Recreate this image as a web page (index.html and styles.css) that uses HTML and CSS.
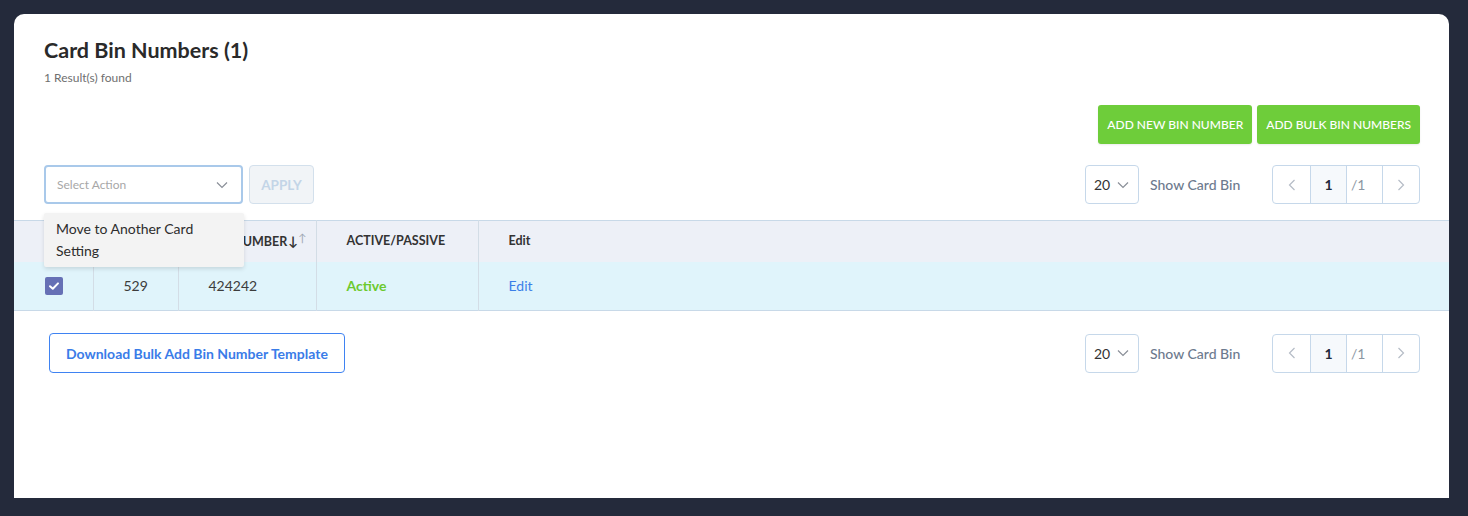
FILE: index.html
```html
<!DOCTYPE html>
<html>
<head>
<meta charset="utf-8">
<link rel="stylesheet" href="styles.css">
</head>
<body>
<div class="card">
  <div class="head">
    <h1 class="title">Card Bin Numbers (1)</h1>
    <div class="subtitle">1 Result(s) found</div>
  </div>
  <div class="actions">
    <button class="btn-green">ADD NEW BIN NUMBER</button>
    <button class="btn-green">ADD BULK BIN NUMBERS</button>
  </div>
  <div class="toolbar">
    <div class="left-tools">
      <div class="select-wrap">
        <div class="select">
          <span class="placeholder">Select Action</span>
          <svg class="chev" width="12" height="8" viewBox="0 0 12 8"><path d="M1 1.5 L6 6.5 L11 1.5" fill="none" stroke="#8a8f98" stroke-width="1.2"/></svg>
        </div>
        <div class="menu">
          <div class="menu-item">Move to Another Card Setting</div>
        </div>
      </div>
      <button class="btn-apply">APPLY</button>
    </div>
    <div class="pager-group">
      <div class="size-select"><span>20</span><svg class="chev" width="12" height="8" viewBox="0 0 12 8"><path d="M1 1.5 L6 6.5 L11 1.5" fill="none" stroke="#8a8f98" stroke-width="1.2"/></svg></div>
      <span class="show-label">Show Card Bin</span>
      <div class="pager">
        <div class="pg pg-nav"><svg width="8" height="12" viewBox="0 0 8 12"><path d="M6.5 1 L1.5 6 L6.5 11" fill="none" stroke="#b5bcc6" stroke-width="1.2"/></svg></div>
        <div class="pg pg-cur">1</div>
        <div class="pg pg-total">/1</div>
        <div class="pg pg-nav pg-last"><svg width="8" height="12" viewBox="0 0 8 12"><path d="M1.5 1 L6.5 6 L1.5 11" fill="none" stroke="#b5bcc6" stroke-width="1.2"/></svg></div>
      </div>
    </div>
  </div>
  <table class="grid">
    <thead>
      <tr>
        <th class="c1"></th>
        <th class="c2"></th>
        <th class="c3">BIN NUMBER<span class="sort"><span class="down">↓</span><span class="up">↑</span></span></th>
        <th class="c4">ACTIVE/PASSIVE</th>
        <th class="c5">Edit</th>
      </tr>
    </thead>
    <tbody>
      <tr>
        <td class="c1"><span class="check"><svg width="12" height="10" viewBox="0 0 12 10"><path d="M2 5.2 L4.8 7.8 L10 2.4" fill="none" stroke="#fff" stroke-width="2" stroke-linecap="round" stroke-linejoin="round"/></svg></span></td>
        <td class="c2">529</td>
        <td class="c3">424242</td>
        <td class="c4 active">Active</td>
        <td class="c5"><a class="edit">Edit</a></td>
      </tr>
    </tbody>
  </table>
  <div class="footer">
    <button class="btn-outline">Download Bulk Add Bin Number Template</button>
    <div class="pager-group">
      <div class="size-select"><span>20</span><svg class="chev" width="12" height="8" viewBox="0 0 12 8"><path d="M1 1.5 L6 6.5 L11 1.5" fill="none" stroke="#8a8f98" stroke-width="1.2"/></svg></div>
      <span class="show-label">Show Card Bin</span>
      <div class="pager">
        <div class="pg pg-nav"><svg width="8" height="12" viewBox="0 0 8 12"><path d="M6.5 1 L1.5 6 L6.5 11" fill="none" stroke="#b5bcc6" stroke-width="1.2"/></svg></div>
        <div class="pg pg-cur">1</div>
        <div class="pg pg-total">/1</div>
        <div class="pg pg-nav pg-last"><svg width="8" height="12" viewBox="0 0 8 12"><path d="M1.5 1 L6.5 6 L1.5 11" fill="none" stroke="#b5bcc6" stroke-width="1.2"/></svg></div>
      </div>
    </div>
  </div>
</div>
</body>
</html>
```
FILE: styles.css
```css
* { box-sizing: border-box; }
html, body { margin: 0; padding: 0; }
body {
  background: #242a3b;
  font-family: "Lato", "Open Sans", sans-serif;
  padding: 14px 19px 18px 14px;
  height: 516px;
  overflow: hidden;
}
.card {
  background: #fff;
  border-radius: 10px 10px 0 0;
  height: 484px;
}
.head { padding: 24px 30px 0; }
.title {
  margin: 0;
  font-size: 21.5px;
  line-height: 24px;
  font-weight: 700;
  color: #2a2a2a;
}
.subtitle {
  margin-top: 9px;
  font-size: 12px;
  line-height: 14px;
  color: #6f6f6f;
}
.actions {
  display: flex;
  justify-content: flex-end;
  gap: 5px;
  padding: 20px 29px 0 30px;
}
.btn-green {
  height: 39px;
  padding: 0 9px;
  border: none;
  border-radius: 3px;
  background: #6ecd3a;
  color: #fff;
  font-family: inherit;
  font-size: 12px;
  font-weight: 500;
  box-shadow: 0 1px 2px rgba(0,0,0,0.08);
}
.toolbar, .footer {
  display: flex;
  justify-content: space-between;
  align-items: center;
  padding: 0 29px 0 30px;
}
.toolbar { margin-top: 21px; }
.left-tools { display: flex; gap: 6px; align-items: center; }
.select-wrap { position: relative; }
.select {
  width: 199px;
  height: 39px;
  border: 2px solid #a9c9ea;
  border-radius: 4px;
  display: flex;
  align-items: center;
  justify-content: space-between;
  padding: 0 13px 0 11px;
}
.placeholder { font-size: 12px; color: #a7a7a7; }
.menu {
  position: absolute;
  top: 48px;
  left: 0;
  width: 200px;
  background: #f3f3f3;
  border-radius: 2px;
  box-shadow: 0 2px 4px rgba(0,0,0,0.12);
  padding: 5px 0 5px;
  z-index: 5;
}
.menu-item {
  font-size: 14px;
  line-height: 22px;
  color: #2d2d2d;
  padding: 0 40px 0 12px;
}
.btn-apply {
  width: 65px;
  height: 39px;
  border: 1px solid #d3e0ec;
  border-radius: 4px;
  background: #f1f4f7;
  color: #c3d5e7;
  font-family: inherit;
  font-size: 13.5px;
  font-weight: 700;
}
.pager-group { display: flex; align-items: center; }
.size-select {
  width: 54px;
  height: 39px;
  border: 1px solid #c6d8ea;
  border-radius: 4px;
  display: flex;
  align-items: center;
  justify-content: space-between;
  padding: 0 9px 0 8px;
  font-size: 14px;
  color: #333;
}
.show-label {
  margin-left: 11px;
  width: 122px;
  font-size: 14px;
  font-weight: 500;
  color: #6d7a8e;
}
.pager {
  display: flex;
  height: 39px;
  border: 1px solid #c6d8ea;
  border-radius: 4px;
  overflow: hidden;
}
.pg {
  display: flex;
  align-items: center;
  justify-content: center;
  border-right: 1px solid #c6d8ea;
  font-size: 14px;
}
.pg-nav { width: 38px; }
.pg-last { border-right: none; width: 36px; }
.pg-cur { width: 36px; background: #f6f9fc; color: #1f2a3a; font-weight: 700; }
.pg-total { width: 36px; color: #8c96a3; justify-content: flex-start; padding-left: 4px; }
.grid {
  width: 100%;
  border-collapse: collapse;
  margin-top: 16px;
  border-top: 1px solid #c8d9e8;
  border-bottom: 1px solid #c8d9e8;
}
.grid th, .grid td { text-align: left; padding: 0 0 0 30px; }
.grid th + th, .grid td + td { border-left: 1px solid #d3dde6; }
.grid thead tr { background: #edf0f7; height: 41px; }
.grid thead th { padding-bottom: 2px; }
.grid tbody tr { background: #e0f4fb; height: 49px; }
.grid tbody td { padding-bottom: 1px; }
.grid th {
  font-size: 12.5px;
  font-weight: 700;
  color: #333;
}
.grid td { font-size: 14px; color: #3c3c3c; }
.c1 { width: 79px; }
.c2 { width: 85px; }
.c3 { width: 138px; }
.c4 { width: 162px; }
.sort { margin-left: 1px; }
.sort .down { font-size: 13px; color: #333; }
.sort .up { font-size: 11px; color: #a0a8b3; font-weight: 400; vertical-align: 4px; }
.check {
  display: inline-flex;
  align-items: center;
  justify-content: center;
  width: 18px;
  height: 18px;
  border-radius: 2px;
  background: #6670b5;
  vertical-align: middle;
  margin-left: 1px;
}
.grid td.active { color: #6cc92e; font-weight: 700; }
.edit { color: #3b7fe8; }
.footer { margin-top: 22px; }
.btn-outline {
  margin-left: 5px;
  height: 40px;
  padding: 0 16px;
  border: 1px solid #3f83f2;
  border-radius: 4px;
  background: #fff;
  color: #3a7ce8;
  font-family: inherit;
  font-size: 14px;
  font-weight: 700;
}
```
